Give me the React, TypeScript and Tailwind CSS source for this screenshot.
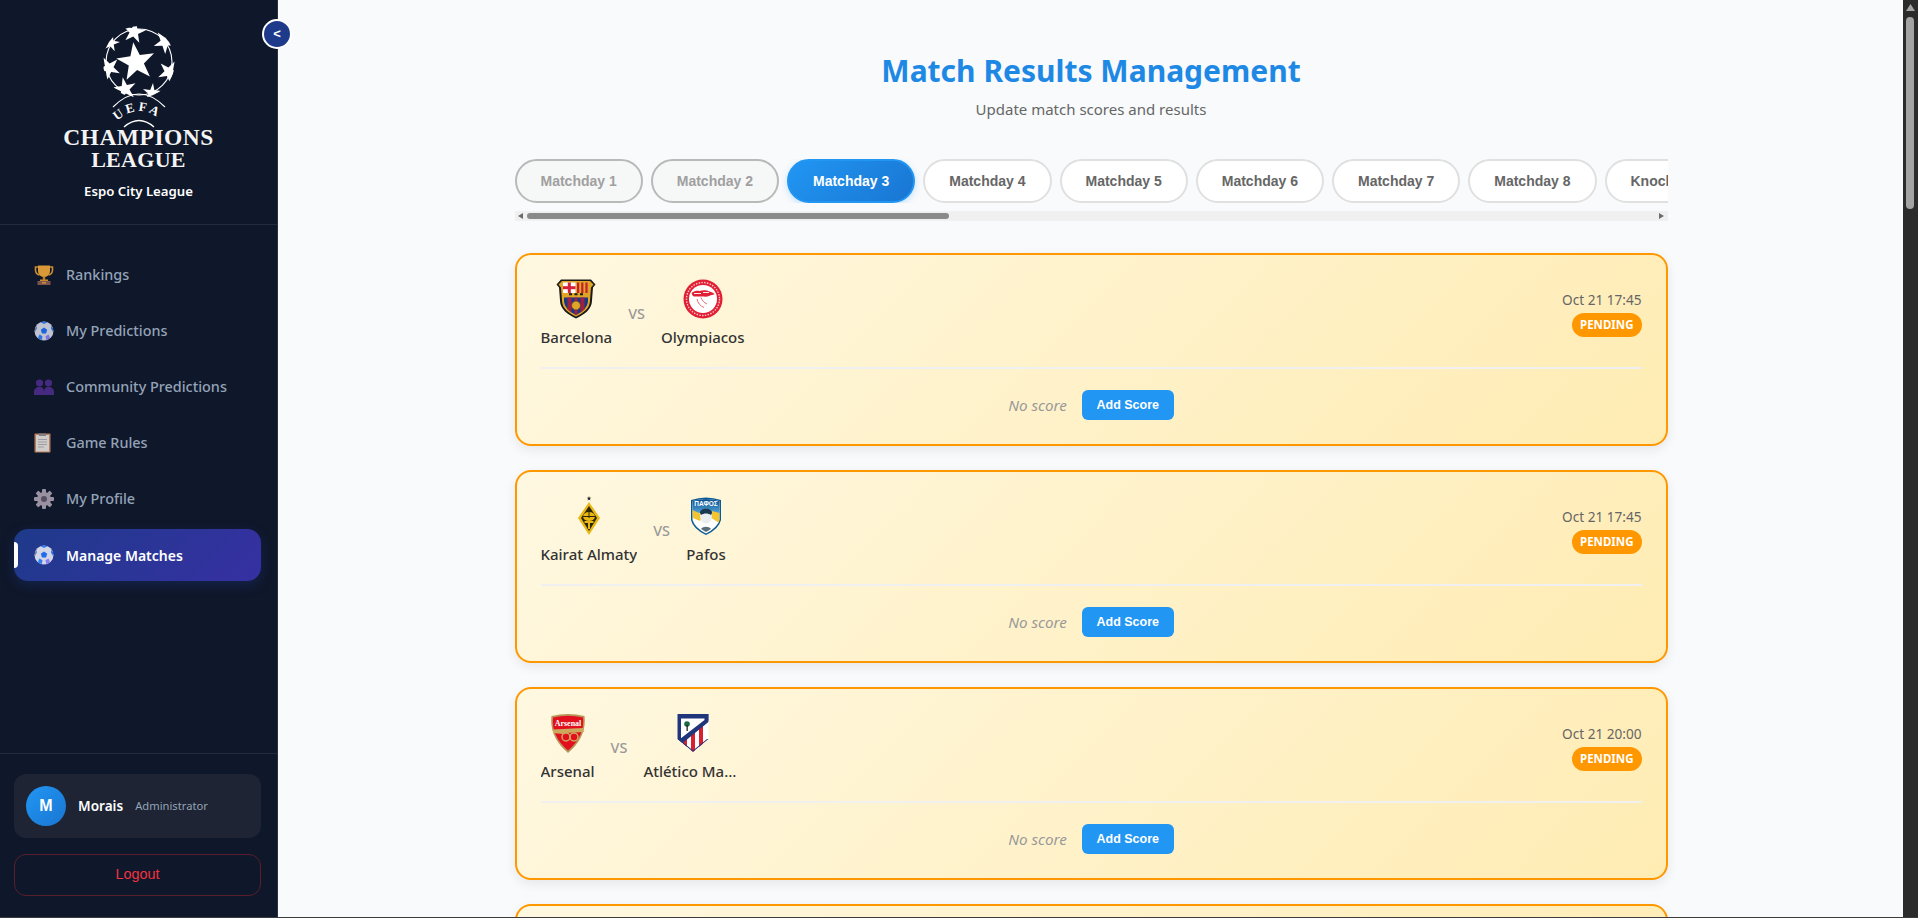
const TABS = ["Matchday 1", "Matchday 2", "Matchday 3", "Matchday 4", "Matchday 5", "Matchday 6", "Matchday 7", "Matchday 8", "Knockout"];

const starPoints = (cx: number, cy: number, r: number, rot: number, inner = 0.38) => {
  const pts: string[] = [];
  for (let i = 0; i < 10; i++) {
    const rad = i % 2 === 0 ? r : r * inner;
    const a = ((rot + i * 36 - 90) * Math.PI) / 180;
    pts.push(`${(cx + rad * Math.cos(a)).toFixed(1)},${(cy + rad * Math.sin(a)).toFixed(1)}`);
  }
  return pts.join(" ");
};

const UclLogo = () => (
  <svg width="80" height="102" viewBox="0 0 80 102" className="block">
    <clipPath id="ball-clip">
      <circle cx="40" cy="36" r="36" />
    </clipPath>
    <circle cx="40" cy="36" r="33" fill="none" stroke="#fff" strokeWidth="1.100" />
    <polygon points={starPoints(37, 36, 20, -8, 0.4)} fill="#fff" />
    <g clipPath="url(#ball-clip)" fill="#fff">
      <polygon points={starPoints(35, 6, 12, 10, 0.38)} />
      <polygon points={starPoints(66, 16, 12, 35, 0.38)} />
      <polygon points={starPoints(70, 46, 12, 100, 0.38)} />
      <polygon points={starPoints(53, 67, 10, 150, 0.36)} />
      <polygon points={starPoints(26, 63, 12, 205, 0.38)} />
      <polygon points={starPoints(10, 42, 12, 260, 0.38)} />
      <polygon points={starPoints(12, 17, 9, 300, 0.36)} />
    </g>
    <path d="M14 92 Q40 66 66 92" fill="none" stroke="#fff" strokeWidth="1.100" transform="translate(0,-11)" />
    <path d="M25 101 Q40 88 55 101" fill="none" stroke="#fff" strokeWidth="1.300" />
    <path id="uefa-arc" d="M15 98 Q40 72 66 98" fill="none" />
    <text fill="#fff" fontSize="13" fontWeight="700" fontFamily="'Liberation Serif', serif" letterSpacing="3">
      <textPath href="#uefa-arc" startOffset="4">UEFA</textPath>
    </text>
  </svg>
);

const Trophy = () => (
  <svg width="20" height="22" viewBox="0 0 20 22">
    <path d="M4 3H1.500v3c0 3 2 4.500 4 5M16 3h2.500v3c0 3-2 4.500-4 5" fill="none" stroke="#e09a2c" strokeWidth="1.600" />
    <path d="M4 1.500h12v5c0 4-2.500 6.500-6 6.500S4 10.500 4 6.500z" fill="#f0a83a" />
    <rect x="8.800" y="12.500" width="2.400" height="3.500" fill="#d08a28" />
    <rect x="6" y="15.500" width="8" height="1.500" fill="#e09a2c" />
    <rect x="3.500" y="17" width="13" height="4" fill="#8a5a50" />
    <rect x="8" y="18" width="4" height="1.500" fill="#d9a040" />
  </svg>
);

const SoccerBall = () => (
  <svg width="20" height="20" viewBox="0 0 20 20">
    <circle cx="10" cy="10" r="9.500" fill="#d3d6e4" />
    <path d="M10 6.500l3.200 2.300-1.200 3.800H8l-1.200-3.800z" fill="#1f6cf0" />
    <path d="M6.500 1.200 10 3 13.500 1.200A9.500 9.500 0 0 0 6.500 1.200z" fill="#2f7df5" />
    <path d="M.9 11 3 7.500l-.6-3A9.500 9.500 0 0 0 .9 11z" fill="#6f80b0" />
    <path d="M19.100 11 17 7.500l.6-3A9.500 9.500 0 0 1 19.100 11z" fill="#1f6cf0" />
    <path d="M4 16.800l1.500-3.300 3 1.800-.8 4A9.500 9.500 0 0 1 4 16.800z" fill="#2f7df5" />
    <path d="M16 16.800l-1.500-3.300-3 1.800.8 4A9.500 9.500 0 0 0 16 16.800z" fill="#8a7cf5" />
  </svg>
);

const Busts = () => (
  <svg width="20" height="16" viewBox="0 0 20 16">
    <g fill="#4c2d8a">
      <circle cx="5.500" cy="4" r="3.600" />
      <path d="M0 16v-3c0-3 2-5 5.500-5S10 10 10 13v3z" />
      <circle cx="14.500" cy="4" r="3.600" />
      <path d="M10 16v-3c0-3 1-5 4.500-5S20 10 20 13v3z" />
    </g>
  </svg>
);

const Clipboard = () => (
  <svg width="17" height="20" viewBox="0 0 17 20">
    <rect x="0.500" y="0.500" width="16" height="19" rx="0.800" fill="#c98a62" />
    <rect x="2" y="2" width="13" height="16.500" fill="#e4e0dc" />
    <rect x="5" y="0.500" width="7" height="2.500" fill="#8f8b90" />
    <path d="M4 6.500h9M4 9h9M4 11.500h9M4 14h6" stroke="#a9a5a8" strokeWidth="0.900" />
  </svg>
);

const Gear = () => (
  <svg width="20" height="20" viewBox="0 0 20 20">
    <g fill="#a99fb0">
      {[0, 45, 90, 135, 180, 225, 270, 315].map((a) => (
        <rect key={a} x="8" y="0" width="4" height="5" rx="1" transform={`rotate(${a} 10 10)`} />
      ))}
      <circle cx="10" cy="10" r="7" />
    </g>
    <circle cx="10" cy="10" r="3" fill="#5e5468" />
  </svg>
);

const Barcelona = () => (
  <svg width="40" height="40" viewBox="0 0 40 40">
    <path d="M5 0.500h30l4.500 5-2.500 3-1 13c0 9-8 14-16 18C12 35.500 4 30.500 4 21.500l-1-13L.5 5.500z" fill="#1a1a1a" />
    <path d="M6 2h28l3.500 3.500-2.500 3-1 13c0 8-7 12.500-14 16-7-3.500-14-8-14-16l-1-13-2.500-3z" fill="#e0a526" />
    <rect x="7" y="3.500" width="12.500" height="10.500" fill="#fff" />
    <rect x="11.800" y="3.500" width="3" height="10.500" fill="#d6203a" />
    <rect x="7" y="7.200" width="12.500" height="3" fill="#d6203a" />
    <path d="M21 3.500h2.200v10.500H21zM25.200 3.500h2.200v10.500h-2.200zM29.400 3.500h2.200v10.500h-2.200z" fill="#c5202f" />
    <rect x="7.500" y="14" width="25" height="4.500" fill="#e0a526" />
    <path d="M13 15.200h3M18.500 15.200h3M24 15.200h3" stroke="#1a1a1a" strokeWidth="2" />
    <path d="M8 18.500h24v3c0 7-6 11.500-12 14.500-6-3-12-7.500-12-14.500z" fill="#123a86" />
    <path d="M11.500 18.500h4v15l-4-3zM18.500 18.500h3v17h-3zM24.500 18.500h4v12l-4 3z" fill="#a31d3f" />
    <circle cx="20" cy="26.500" r="4.300" fill="#e0a526" stroke="#7a5510" strokeWidth="0.600" />
  </svg>
);

const Olympiacos = () => (
  <svg width="40" height="40" viewBox="0 0 40 40">
    <circle cx="20" cy="20" r="19.500" fill="#e11f34" />
    <circle cx="20" cy="20" r="16.500" fill="none" stroke="#f9c4c9" strokeWidth="1.400" strokeDasharray="1.500 1.300" />
    <circle cx="20" cy="20" r="14" fill="#fff" />
    <path d="M8.500 14c3-2.500 6-2.500 8-2 3-1 7-1 10 .5 2 .5 4 1 5 3-2 .5-4 .5-5.500 1.500-2 1-5 .5-7 .5H11c-1.500-.5-2-2-2.500-3.500z" fill="#e11f34" />
    <path d="M11 14.500h7M20 13.500h6" stroke="#fff" strokeWidth="0.900" />
    <path d="M18 18.500c1 3 3 5 6 6.500M14 20c1 4 3 7 7 8.500" fill="none" stroke="#e96a77" strokeWidth="1" />
  </svg>
);

const Kairat = () => (
  <svg width="40" height="40" viewBox="0 0 40 40">
    <polygon points={starPoints(20, 2.500, 2.500, 0)} fill="#222" />
    <polygon points="20,6 31,22 20,39 9,22" fill="#e9b814" />
    <polygon points="20,10 28,22 20,35 12,22" fill="#2a2408" />
    <ellipse cx="20" cy="20.500" rx="6" ry="4.500" fill="#e9b814" />
    <path d="M14 20.500h12M20 16v6" stroke="#2a2408" strokeWidth="1" />
    <path d="M15.500 26h9M20 25v8" stroke="#e9b814" strokeWidth="2" />
  </svg>
);

const Pafos = () => (
  <svg width="40" height="40" viewBox="0 0 40 40">
    <defs>
      <linearGradient id="pafos-top" x1="0" y1="0" x2="0" y2="1">
        <stop offset="0" stopColor="#0a4f8f" />
        <stop offset="1" stopColor="#5fb3e4" />
      </linearGradient>
    </defs>
    <path d="M5 4 Q20 -1 35 4 L35 24 Q33 33 20 39 Q7 33 5 24z" fill="#0b5a96" />
    <path d="M6.500 5 Q20 1 33.500 5 L33.500 24 Q31 32 20 37.500 Q9 32 6.500 24z" fill="#fff" />
    <path d="M6.500 5 Q20 1 33.500 5 L33.500 20 L6.500 16z" fill="url(#pafos-top)" />
    <path d="M6.500 14 L17 19 L14 25 L7 22z" fill="#f4c430" />
    <path d="M33.500 17 L26 15 L24 21 L33 27z" fill="#f4c430" />
    <ellipse cx="20" cy="20" rx="6" ry="7.500" fill="#e8edf0" />
    <path d="M14 17c0-6 12-6 12 0l-1 2c-3-2-7-2-10 0z" fill="#17384f" />
    <path d="M15 33c2-3 8-3 10 0l-5 3z" fill="#5a6e78" />
    <text x="20" y="9.500" textAnchor="middle" fill="#fff" fontSize="6.500" fontWeight="700" fontFamily="'Liberation Sans', sans-serif">ΠΑΦΟΣ</text>
  </svg>
);

const Arsenal = () => (
  <svg width="40" height="40" viewBox="0 0 40 40">
    <path d="M3.500 3 Q20 -1 36.500 3 Q39 24 20 40 Q1 24 3.500 3z" fill="#b8965a" />
    <path d="M5 4.500 Q20 1 35 4.500 Q37 23 20 37.500 Q3 23 5 4.500z" fill="#e2101f" />
    <text x="20" y="13" textAnchor="middle" fill="#fff" fontSize="8" fontWeight="700" fontFamily="'Liberation Serif', serif">Arsenal</text>
    <path d="M5 16.500 L35 15 L36 19 L18 20 L15 21 L5 20z" fill="#cda95e" />
    <circle cx="18" cy="24" r="4" fill="none" stroke="#cda95e" strokeWidth="1.500" />
    <circle cx="26" cy="24" r="4" fill="none" stroke="#cda95e" strokeWidth="1.500" />
  </svg>
);

const Atletico = () => (
  <svg width="40" height="40" viewBox="0 0 40 40">
    <clipPath id="atm-shield">
      <path d="M4.500 1h31v25L20 39 4.500 26z" />
    </clipPath>
    <g clipPath="url(#atm-shield)">
      <rect x="4" y="0" width="32" height="40" fill="#fff" />
      <path d="M10 0h4v40h-4zM18 0h4v40h-4zM26 0h4v40h-4z" fill="#d8202e" />
      <path d="M4 1h32v3.500L8 28l-4-2z" fill="#fff" />
      <path d="M4 1h32v4.500H4zM4 1h4v26H4zM5 27.500 36 3.500v5L8.500 31z" fill="#20357a" />
      <path d="M31.500 1h4v6h-4zM20 39l-16-13h2l14 11.500L34 26h2z" fill="#20357a" />
      <circle cx="14" cy="11" r="2.800" fill="#1a6b3f" />
      <rect x="13.500" y="12" width="1.300" height="6" fill="#222" />
    </g>
  </svg>
);

const Leverkusen = () => (
  <svg width="40" height="40" viewBox="0 0 40 40">
    <circle cx="20" cy="20" r="19" fill="#d8202e" />
  </svg>
);

type Match = {
  home: string;
  away: string;
  time: string;
  homeLogo: React.ReactNode;
  awayLogo: React.ReactNode;
};

const MATCHES: Match[] = [
  { home: "Barcelona", away: "Olympiacos", time: "Oct 21 17:45", homeLogo: <Barcelona />, awayLogo: <Olympiacos /> },
  { home: "Kairat Almaty", away: "Pafos", time: "Oct 21 17:45", homeLogo: <Kairat />, awayLogo: <Pafos /> },
  { home: "Arsenal", away: "Atlético Madrid", time: "Oct 21 20:00", homeLogo: <Arsenal />, awayLogo: <Atletico /> },
  { home: "Leverkusen", away: "PSG", time: "Oct 21 20:00", homeLogo: <Leverkusen />, awayLogo: <Leverkusen /> },
];

const NAV = [
  { label: "Rankings", icon: <Trophy /> },
  { label: "My Predictions", icon: <SoccerBall /> },
  { label: "Community Predictions", icon: <Busts /> },
  { label: "Game Rules", icon: <Clipboard /> },
  { label: "My Profile", icon: <Gear /> },
];

const Team = ({ name, logo }: { name: string; logo: React.ReactNode }) => (
  <div className="flex flex-col items-center gap-[7px] max-w-[100px]">
    <div className="w-10 h-10 flex items-center justify-center">{logo}</div>
    <span className="w-full truncate text-center text-[15px] leading-[23px] font-medium text-[#333]">{name}</span>
  </div>
);

const MatchCard = ({ match }: { match: Match }) => (
  <div className="shrink-0 h-[193px] mb-6 rounded-2xl border-2 border-[#ff9800] bg-[linear-gradient(135deg,#fff8e1,#ffecb3)] p-6 shadow-[0_4px_12px_rgba(0,0,0,0.08)]">
    <div className="flex justify-between items-start h-[90px] pb-[18px] border-b-2 border-[#f0f0f0]">
      <div className="flex items-center gap-4">
        <Team name={match.home} logo={match.homeLogo} />
        <span className="text-[14.4px] font-medium text-[#999]">VS</span>
        <Team name={match.away} logo={match.awayLogo} />
      </div>
      <div className="flex flex-col items-end pt-[9px]">
        <span className="text-[13.6px] leading-[24px] text-[#666]">{match.time}</span>
        <span className="mt-[1px] h-6 px-2 rounded-xl bg-[#ff9800] text-white text-[11.5px] leading-6 font-bold">PENDING</span>
      </div>
    </div>
    <div className="flex items-center justify-center gap-[15px] pt-[21px]">
      <span className="text-[15.2px] italic text-[#999]">No score</span>
      <button className="w-[92px] h-[30px] rounded-md bg-[#2196f3] text-white text-[12.5px] font-bold font-['Liberation_Sans',sans-serif]">Add Score</button>
    </div>
  </div>
);

const MatchdayTab = ({ label, index }: { label: string; index: number }) => {
  let style = "bg-white border-[#e0e0e0] text-[#666]";
  if (index < 2) style = "bg-[#f6f7f7] border-[#b9b9b9] text-[#a0a0a0]";
  if (index === 2) style = "bg-[linear-gradient(135deg,#2196f3,#1976d2)] border-[#2196f3] text-white shadow-[0_2px_6px_rgba(33,150,243,0.25)]";
  return (
    <button className={`shrink-0 px-6 h-11 rounded-[22px] border-2 text-[14px] font-bold whitespace-nowrap font-['Liberation_Sans',sans-serif] ${style}`}>
      {label}
    </button>
  );
};

export default function App() {
  return (
    <div className="flex flex-col h-[918px] overflow-hidden font-['Noto_Sans',sans-serif]">
      <div className="flex flex-1 min-h-0">
        {/* sidebar */}
        <aside className="relative w-[278px] shrink-0 flex flex-col bg-[#0f172a] border-r border-[#2a3142]">
          <div className="h-[225px] shrink-0 flex flex-col items-center pt-[26px] border-b border-[#232b3d]">
            <UclLogo />
            <div className="-mt-px text-[#f4f4f4] text-center font-['Liberation_Serif',serif] font-bold leading-[21.5px]">
              <div className="text-[23.5px] tracking-[0.5px]">CHAMPIONS</div>
              <div className="text-[22px] tracking-[0.3px]">LEAGUE</div>
            </div>
            <div className="mt-[11px] text-white text-[13.2px] font-semibold leading-[20px]">Espo City League</div>
          </div>
          <nav className="flex-1 flex flex-col gap-1 pl-[14px] pr-4 pt-6">
            {NAV.map((item) => (
              <a key={item.label} className="h-[52px] flex items-center pl-5 text-[#94a3b8] text-[14.4px] font-medium">
                <span className="w-8 shrink-0 flex items-center opacity-90">{item.icon}</span>
                {item.label}
              </a>
            ))}
            <a className="relative h-[52px] flex items-center pl-5 rounded-[14px] bg-[linear-gradient(135deg,#1e3a8a,#3730a3)] text-white text-[14px] font-semibold shadow-[0_4px_12px_rgba(30,58,138,0.35)]">
              <span className="absolute left-0 top-[13px] w-1 h-[26px] bg-white rounded-r" />
              <span className="w-8 shrink-0 flex items-center"><SoccerBall /></span>
              Manage Matches
            </a>
          </nav>
          <div className="shrink-0 border-t border-[#232b3d] pl-[14px] pr-4 pt-5 pb-[21px] flex flex-col gap-4">
            <div className="h-16 rounded-xl bg-[#1e2433] flex items-center pl-3 gap-3">
              <div className="w-10 h-10 rounded-full bg-[linear-gradient(135deg,#2196f3,#1976d2)] flex items-center justify-center text-white font-bold text-[16px] font-['Liberation_Sans',sans-serif]">M</div>
              <span className="text-white text-[13.6px] font-semibold">Morais</span>
              <span className="text-[#94a3b8] text-[11.2px]">Administrator</span>
            </div>
            <button className="h-[42px] rounded-xl border border-[#5a1f2c] text-[#ef3340] text-[14.4px] font-['Liberation_Sans',sans-serif]">Logout</button>
          </div>
          <button className="absolute left-[262px] top-[19px] w-[30px] h-[30px] rounded-full bg-[#1e3a8a] border-2 border-white flex items-center justify-center text-white text-[13px] font-bold font-['Liberation_Sans',sans-serif]">&lt;</button>
        </aside>

        {/* main */}
        <main className="flex-1 min-w-0 bg-[#f8fafc] overflow-hidden flex flex-col items-center">
          <div className="w-[1153px] shrink-0 ml-[1px] flex flex-col pt-[48px]">
            <h1 className="text-center text-[30px] leading-[46px] font-bold text-[#1e88e5]">Match Results Management</h1>
            <p className="mt-[3px] text-center text-[15px] leading-[24px] text-[#666]">Update match scores and results</p>
            <div className="mt-[38px] flex gap-2 overflow-hidden">
              {TABS.map((t, i) => (
                <MatchdayTab key={t} label={t} index={i} />
              ))}
            </div>
            <div className="mt-2 h-[10px] bg-[#f0f0f0] flex items-center">
              <span className="w-3 flex justify-center text-[#6b6b6b]">
                <svg width="5" height="6" viewBox="0 0 5 6"><path d="M5 0v6L0 3z" fill="currentColor" /></svg>
              </span>
              <span className="w-[422px] h-[6px] rounded-[3px] bg-[#8a8a8a]" />
              <span className="ml-auto w-3 flex justify-center text-[#6b6b6b]">
                <svg width="5" height="6" viewBox="0 0 5 6"><path d="M0 0v6l5-3z" fill="currentColor" /></svg>
              </span>
            </div>
            <div className="mt-8 flex flex-col">
              {MATCHES.map((m) => (
                <MatchCard key={m.home} match={m} />
              ))}
            </div>
          </div>
        </main>

        {/* window scrollbar */}
        <div className="w-[15px] shrink-0 bg-[#2b2b2b] flex flex-col items-center pt-1 pr-[1px]">
          <svg width="9" height="7" viewBox="0 0 9 7" className="shrink-0"><path d="M4.500 0 9 7H0z" fill="#a3a3a3" /></svg>
          <div className="mt-[6px] w-2 h-[192px] rounded bg-[#a3a3a3]" />
        </div>
      </div>
      <div className="h-px shrink-0 bg-[#3c3c3c]" />
    </div>
  );
}
